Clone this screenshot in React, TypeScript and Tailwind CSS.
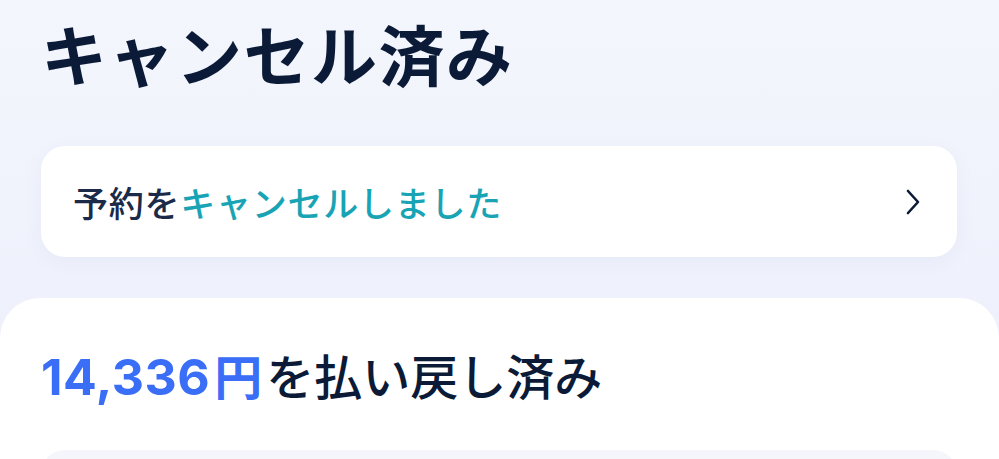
import React from 'react';

const jp = { fontFamily: '"Noto Sans CJK JP", "Noto Sans", sans-serif' };

function Chevron() {
  return (
    <svg width="16" height="28" viewBox="0 0 16 28" fill="none" className="text-[#0b1a36]">
      <path d="M3 3 L13 14 L3 25" stroke="currentColor" strokeWidth="2.6" strokeLinecap="round" strokeLinejoin="round" />
    </svg>
  );
}

export default function App() {
  return (
    <div
      className="w-[999px] h-[459px] overflow-hidden bg-gradient-to-b from-[#f4f6fd] to-[#eceffb] text-[#0b1a36]"
      style={jp}
    >
      <div className="px-[41px]">
        <h1 className="pt-[19px] h-[146px] text-[66px] font-bold leading-none tracking-[1.5px]">
          キャンセル済み
        </h1>

        <button className="w-[916px] h-[111px] flex items-center justify-between bg-white rounded-[24px] pl-[32px] pr-[36px] shadow-[0_4px_20px_rgba(60,80,160,0.05)]">
          <span className="text-[35px] font-medium leading-none text-[#1a2a48] tracking-[0.75px]">
            予約を<span className="text-[#18a4b4]">キャンセルしました</span>
          </span>
          <Chevron />
        </button>
      </div>

      <div className="mt-[41px] bg-white rounded-t-[40px] px-[41px] pt-[52px]">
        <div className="flex items-baseline text-[48px] font-medium leading-none">
          <span
            className="text-[#3a6ef6] font-bold text-[50px] tracking-[0.5px]"
            style={{ fontFamily: 'Inter, "Noto Sans", sans-serif' }}
          >
            14,336
          </span>
          <span className="text-[#3a6ef6] font-semibold ml-[4px]">円</span>
          <span className="ml-[4px]">を払い戻し済み</span>
        </div>
        <div className="mt-[48px] h-[80px] w-[916px] rounded-[24px] bg-[#f5f6fb]" />
      </div>
    </div>
  );
}
